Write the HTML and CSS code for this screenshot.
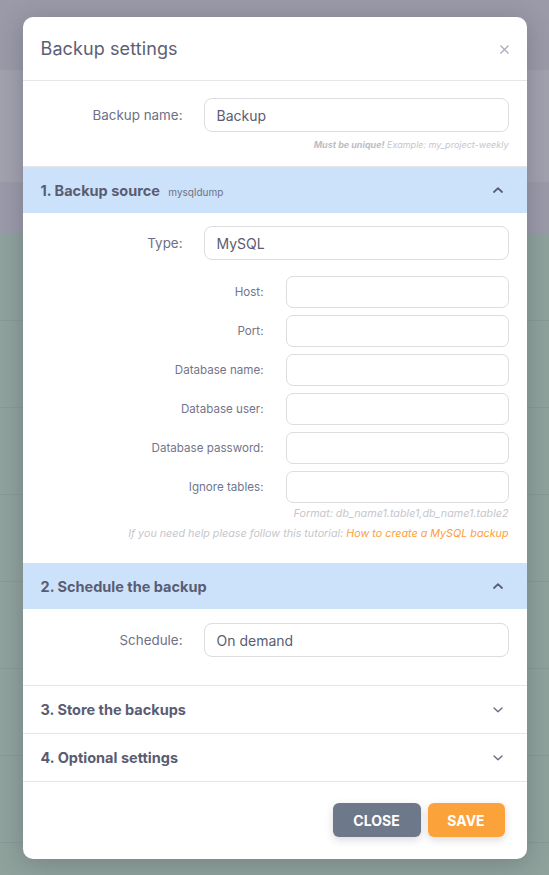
FILE: index.html
```html
<!DOCTYPE html>
<html lang="en">
<head>
<meta charset="utf-8">
<title>Backup settings</title>
<link rel="stylesheet" href="styles.css">
</head>
<body>
<div class="modal">
  <div class="modal-header">
    <h1 class="modal-title">Backup settings</h1>
    <button class="close-x" aria-label="Close">
      <svg width="9" height="9" viewBox="0 0 9 9"><path d="M0.5 0.5L8.5 8.5M8.5 0.5L0.5 8.5" stroke="#a9a9bb" stroke-width="1.2" fill="none"/></svg>
    </button>
  </div>

  <div class="section-body name-body">
    <div class="row">
      <label class="label">Backup name:</label>
      <div class="input">Backup</div>
    </div>
    <div class="hint hint-name"><b>Must be unique!</b> Example: my_project-weekly</div>
  </div>

  <div class="acc-head open">
    <div class="acc-title">1. Backup source <span class="acc-sub">mysqldump</span></div>
    <svg class="chev" width="10" height="6" viewBox="0 0 10 6"><path d="M1 5L5 1.2L9 5" stroke="#5c5e72" stroke-width="1.8" fill="none" stroke-linecap="round" stroke-linejoin="round"/></svg>
  </div>
  <div class="section-body src-body">
    <div class="row">
      <label class="label">Type:</label>
      <div class="input">MySQL</div>
    </div>
    <div class="subfields">
      <div class="row sub"><label class="label small">Host:</label><div class="input sm"></div></div>
      <div class="row sub"><label class="label small">Port:</label><div class="input sm"></div></div>
      <div class="row sub"><label class="label small">Database name:</label><div class="input sm"></div></div>
      <div class="row sub"><label class="label small">Database user:</label><div class="input sm"></div></div>
      <div class="row sub"><label class="label small">Database password:</label><div class="input sm"></div></div>
      <div class="row sub"><label class="label small">Ignore tables:</label><div class="input sm"></div></div>
    </div>
    <div class="hint hint-format">Format: db_name1.table1,db_name1.table2</div>
    <div class="hint hint-help">If you need help please follow this tutorial: <a class="link">How to create a MySQL backup</a></div>
  </div>

  <div class="acc-head open">
    <div class="acc-title">2. Schedule the backup</div>
    <svg class="chev" width="10" height="6" viewBox="0 0 10 6"><path d="M1 5L5 1.2L9 5" stroke="#5c5e72" stroke-width="1.8" fill="none" stroke-linecap="round" stroke-linejoin="round"/></svg>
  </div>
  <div class="section-body sched-body">
    <div class="row">
      <label class="label">Schedule:</label>
      <div class="input">On demand</div>
    </div>
  </div>

  <div class="acc-head closed">
    <div class="acc-title">3. Store the backups</div>
    <svg class="chev" width="10" height="6" viewBox="0 0 10 6"><path d="M1 1L5 4.8L9 1" stroke="#6a6c80" stroke-width="1.4" fill="none" stroke-linecap="round" stroke-linejoin="round"/></svg>
  </div>
  <div class="acc-head closed">
    <div class="acc-title">4. Optional settings</div>
    <svg class="chev" width="10" height="6" viewBox="0 0 10 6"><path d="M1 1L5 4.8L9 1" stroke="#6a6c80" stroke-width="1.4" fill="none" stroke-linecap="round" stroke-linejoin="round"/></svg>
  </div>

  <div class="modal-footer">
    <button class="btn btn-close">CLOSE</button>
    <button class="btn btn-save">SAVE</button>
  </div>
</div>
</body>
</html>
```

FILE: styles.css
```css
html, body {
  margin: 0;
  padding: 0;
}
body {
  width: 549px;
  height: 875px;
  overflow: hidden;
  font-family: Inter, "Noto Sans", sans-serif;
  background:
    repeating-linear-gradient(to bottom, transparent 0 86px, rgba(0,0,0,0.05) 86px 87px) 0 234px / 100% 100% no-repeat,
    linear-gradient(to bottom, #9b9aa8 0 70px, #a2a1ae 70px 182px, #9b9aa9 182px 233px, #8fa29c 233px);
  padding-top: 17px;
  box-sizing: border-box;
}
.modal {
  width: 504px;
  margin: 0 auto;
  background: #fff;
  border-radius: 10px;
  box-shadow: 0 4px 24px rgba(40, 40, 60, 0.25);
  overflow: hidden;
}
.modal-header {
  height: 63px;
  display: flex;
  align-items: center;
  justify-content: space-between;
  padding: 0 18px;
  border-bottom: 1px solid #e7e7eb;
}
.modal-title {
  margin: 0;
  font-size: 18px;
  font-weight: 400;
  color: #5c5e74;
  padding-top: 0;
  letter-spacing: 0.1px;
}
.close-x {
  border: 0;
  background: none;
  padding: 0;
  width: 9px;
  height: 9px;
  display: flex;
  margin-top: 1px;
}
.section-body {
  padding: 0 18px;
}
.name-body {
  padding-top: 17px;
  padding-bottom: 15px;
  border-bottom: 1px solid #e7e7eb;
}
.row {
  display: grid;
  grid-template-columns: 142px 1fr;
  column-gap: 21px;
  align-items: center;
}
.row.sub {
  grid-template-columns: 223px 1fr;
  column-gap: 22px;
}
.label {
  text-align: right;
  font-size: 13.4px;
  color: #6e7086;
}
.label.small {
  font-size: 11.6px;
  color: #73758a;
}
.input {
  height: 34px;
  box-sizing: border-box;
  border: 1px solid #dcdce1;
  border-radius: 8px;
  padding: 0 12px;
  display: flex;
  align-items: center;
  font-size: 14px;
  color: #5a5c70;
}
.input.sm {
  height: 32px;
  border-radius: 7px;
}
.hint {
  text-align: right;
  font-style: italic;
  color: #c6c6cc;
  line-height: 12px;
}
.hint-name {
  font-size: 9px;
  margin-top: 7px;
}
.hint-name b {
  font-weight: 700;
  color: #bdbdc4;
}
.hint-format {
  font-size: 10.75px;
  margin-top: 5px;
}
.hint-help {
  font-size: 10.75px;
  margin-top: 8px;
}
.link {
  color: #fd9e38;
}
.acc-head {
  display: flex;
  align-items: center;
  justify-content: space-between;
  padding: 0 24px 0 18px;
}
.acc-head.open {
  height: 46px;
  background: #cce2fb;
}
.acc-head.closed {
  height: 47px;
  border-bottom: 1px solid #e7e7eb;
}
.acc-title {
  font-size: 14.5px;
  font-weight: 700;
  color: #5a5c72;
}
.acc-sub {
  font-size: 10px;
  font-weight: 400;
  color: #6e7086;
  margin-left: 5px;
}
.chev {
  display: block;
}
.src-body {
  padding-top: 13px;
  padding-bottom: 23px;
}
.subfields {
  margin-top: 16px;
  display: flex;
  flex-direction: column;
  gap: 7px;
}
.sched-body {
  padding-top: 14px;
  padding-bottom: 28px;
  border-bottom: 1px solid #e7e7eb;
}
.modal-footer {
  height: 77px;
  display: flex;
  justify-content: flex-end;
  align-items: flex-start;
  gap: 7px;
  padding: 21px 22px 0 0;
  box-sizing: border-box;
}
.btn {
  height: 34px;
  border: 0;
  border-radius: 6px;
  color: #fff;
  font-family: Inter, "Noto Sans", sans-serif;
  font-size: 14px;
  font-weight: 700;
  box-shadow: 0 3px 8px rgba(0, 0, 0, 0.15);
}
.btn-close {
  width: 88px;
  background: #6e788b;
}
.btn-save {
  width: 77px;
  background: #fca23b;
}
```
